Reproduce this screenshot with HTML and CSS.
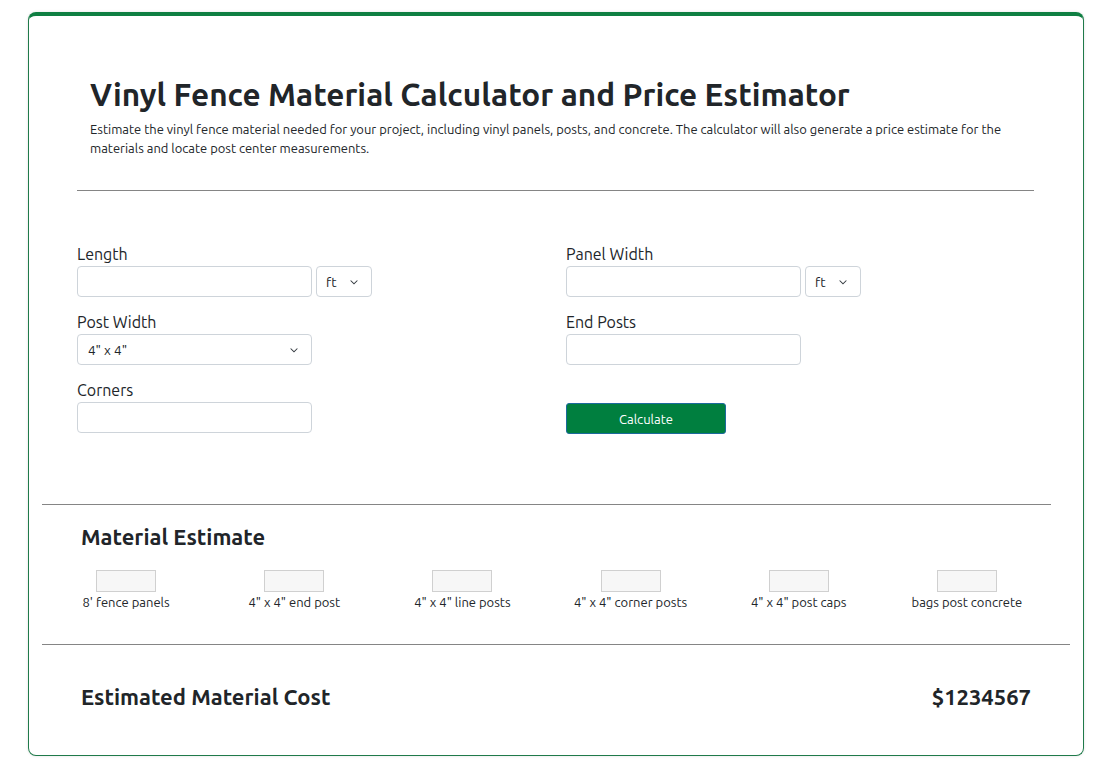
FILE: index.html
```html
<!DOCTYPE html>
<html lang="en">
<head>
<meta charset="utf-8">
<title>Vinyl Fence Material Calculator and Price Estimator</title>
<link rel="stylesheet" href="styles.css">
</head>
<body>
<div class="card">
  <section class="intro">
    <div class="intro-text">
      <h1 class="title">Vinyl Fence Material Calculator and Price Estimator</h1>
      <p class="lead">Estimate the vinyl fence material needed for your project, including vinyl panels, posts, and concrete. The calculator will also generate a price estimate for the materials and locate post center measurements.</p>
    </div>
    <hr class="rule">
    <form class="form-grid">
      <div class="field">
        <label class="label">Length</label>
        <div class="input-row">
          <input class="input" type="text">
          <div class="select unit"><span>ft</span><svg class="chev" viewBox="0 0 16 16"><path d="M3.5 6l4.5 4.5 4.5-4.5"/></svg></div>
        </div>
      </div>
      <div class="field">
        <label class="label">Panel Width</label>
        <div class="input-row">
          <input class="input" type="text">
          <div class="select unit"><span>ft</span><svg class="chev" viewBox="0 0 16 16"><path d="M3.5 6l4.5 4.5 4.5-4.5"/></svg></div>
        </div>
      </div>
      <div class="field">
        <label class="label">Post Width</label>
        <div class="select wide"><span>4" x 4"</span><svg class="chev" viewBox="0 0 16 16"><path d="M3.5 6l4.5 4.5 4.5-4.5"/></svg></div>
      </div>
      <div class="field">
        <label class="label">End Posts</label>
        <input class="input" type="text">
      </div>
      <div class="field">
        <label class="label">Corners</label>
        <input class="input" type="text">
      </div>
      <div class="field field-btn">
        <button class="btn" type="button">Calculate</button>
      </div>
    </form>
  </section>
  <section class="materials">
    <hr class="rule">
    <h2 class="sub">Material Estimate</h2>
    <div class="mat-grid">
      <div class="mat"><div class="mat-box"></div><span>8' fence panels</span></div>
      <div class="mat"><div class="mat-box"></div><span>4" x 4" end post</span></div>
      <div class="mat"><div class="mat-box"></div><span>4" x 4" line posts</span></div>
      <div class="mat"><div class="mat-box"></div><span>4" x 4" corner posts</span></div>
      <div class="mat"><div class="mat-box"></div><span>4" x 4" post caps</span></div>
      <div class="mat"><div class="mat-box"></div><span>bags post concrete</span></div>
    </div>
  </section>
  <section class="cost">
    <hr class="rule">
    <div class="cost-row">
      <h2 class="sub">Estimated Material Cost</h2>
      <h2 class="sub">$1234567</h2>
    </div>
  </section>
</div>
</body>
</html>
```
FILE: styles.css
```css
* { box-sizing: border-box; }
body {
  margin: 0;
  background: #fff;
  font-family: "Ubuntu", "Lato", "Noto Sans", sans-serif;
  color: #212529;
}
.card {
  margin: 12px 36px 24px 28px;
  border: 1px solid #1f7a4a;
  border-top: 4px solid #0f7f42;
  border-radius: 8px;
  box-shadow: 0 0 3px rgba(0,0,0,0.12);
  height: 744px;
}
.intro { padding: 60px 49px 0 48px; }
.intro-text { padding-left: 13px; }
.title {
  margin: 0;
  font-size: 31.5px;
  font-weight: 600;
  line-height: 38px;
}
.lead {
  margin: 6px 0 0;
  font-size: 12.96px;
  line-height: 19px;
}
.rule {
  margin: 0;
  border: 0;
  border-top: 1px solid #858585;
}
.intro .rule { margin-top: 32px; }
.form-grid {
  display: grid;
  grid-template-columns: 1fr 1fr;
  column-gap: 21px;
  row-gap: 13px;
  margin-top: 51px;
}
.field { display: flex; flex-direction: column; align-items: flex-start; }
.label { font-size: 16px; line-height: 24px; }
.input-row { display: flex; gap: 4px; }
.input {
  width: 235px;
  height: 31px;
  border: 1px solid #ced4da;
  border-radius: 4px;
  background: #fff;
}
.select {
  height: 31px;
  border: 1px solid #ced4da;
  border-radius: 4px;
  display: flex;
  align-items: center;
  justify-content: space-between;
  font-size: 13.5px;
  background: #fff;
}
.unit { width: 56px; padding: 0 11px 0 9px; }
.wide { width: 235px; padding: 0 11px 0 10px; }
.chev { width: 12px; height: 12px; fill: none; stroke: #343a40; stroke-width: 1.4; }
.field-btn { padding-top: 25px; }
.btn {
  width: 160px;
  height: 31px;
  background: #007f3f;
  color: #fff;
  border: 1px solid #1c6a9c;
  border-radius: 3px;
  font-family: inherit;
  font-size: 13px;
}
.materials { padding: 70px 32px 0 13px; }
.sub {
  margin: 0;
  font-size: 22px;
  font-weight: 600;
  line-height: 28px;
}
.materials .sub { margin: 18px 0 0 39px; }
.mat-grid {
  display: grid;
  grid-template-columns: repeat(6, 1fr);
  margin-top: 19px;
}
.mat { display: flex; flex-direction: column; align-items: center; font-size: 13px; line-height: 20px; }
.mat-box { width: 60px; height: 22px; background: #f7f7f7; border: 1px solid #d0d0d0; }
.cost { padding: 32px 13px 0 13px; }
.cost-row {
  display: flex;
  justify-content: space-between;
  padding: 38px 39px 0 39px;
}
```
